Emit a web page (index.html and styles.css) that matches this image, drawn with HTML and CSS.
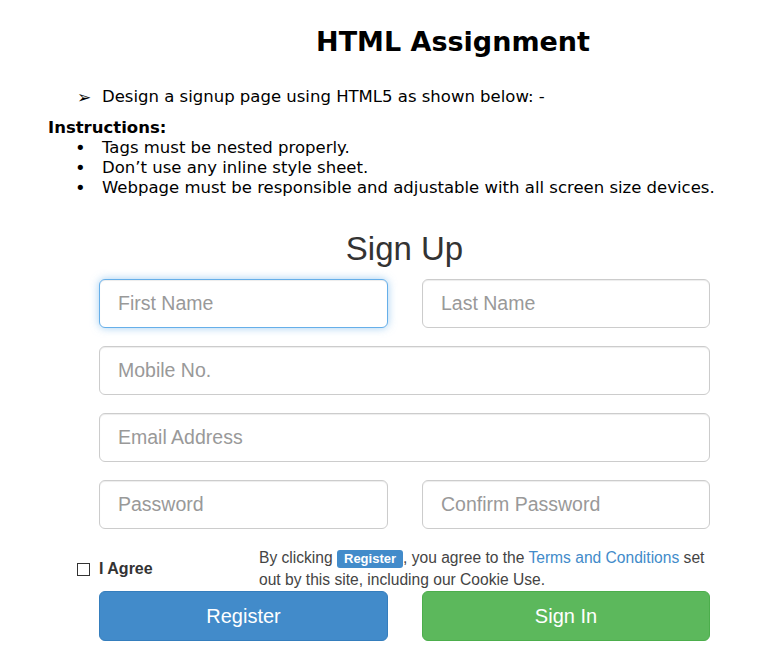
FILE: index.html
```html
<!DOCTYPE html>
<html lang="en">
<head>
<meta charset="utf-8">
<title>HTML Assignment</title>
<link rel="stylesheet" href="styles.css">
</head>
<body>
<div class="page">
  <h1 class="title">HTML Assignment</h1>
  <div class="task"><span class="arrow">➢</span><span>Design a signup page using HTML5 as shown below: -</span></div>
  <div class="instructions">
    <div class="ins-title">Instructions:</div>
    <ul class="ins-list">
      <li><span class="dot">•</span><span>Tags must be nested properly.</span></li>
      <li><span class="dot">•</span><span>Don’t use any inline style sheet.</span></li>
      <li><span class="dot">•</span><span>Webpage must be responsible and adjustable with all screen size devices.</span></li>
    </ul>
  </div>
  <form class="signup">
    <h2 class="signup-title">Sign Up</h2>
    <div class="grid">
      <input class="field focused" type="text" placeholder="First Name">
      <input class="field" type="text" placeholder="Last Name">
      <input class="field wide" type="text" placeholder="Mobile No.">
      <input class="field wide" type="email" placeholder="Email Address">
      <input class="field" type="password" placeholder="Password">
      <input class="field" type="password" placeholder="Confirm Password">
    </div>
    <div class="agree-row">
      <label class="agree"><span class="box"></span><span>I Agree</span></label>
      <p class="terms">By clicking <span class="badge">Register</span>, you agree to the <a class="link" href="#">Terms and Conditions</a> set out by this site, including our Cookie Use.</p>
    </div>
    <div class="grid buttons">
      <button class="btn btn-blue" type="button">Register</button>
      <button class="btn btn-green" type="button">Sign In</button>
    </div>
  </form>
</div>
</body>
</html>
```
FILE: styles.css
```css
html, body {
  margin: 0;
  padding: 0;
  background: #fff;
}
body {
  font-family: "DejaVu Sans", sans-serif;
  color: #000;
}
.page {
  padding: 0 8px;
}
.title {
  margin: 0;
  padding: 26px 0 0 148px;
  text-align: center;
  font-size: 27px;
  font-weight: bold;
  line-height: 31px;
}
.task {
  display: flex;
  align-items: center;
  margin: 30px 0 0 69px;
  font-size: 16.5px;
  line-height: 20px;
}
.arrow {
  width: 25px;
  font-size: 17px;
}
.instructions {
  margin-top: 11px;
  font-size: 16.5px;
  line-height: 20px;
}
.ins-title {
  margin-left: 40px;
  font-weight: bold;
}
.ins-list {
  list-style: none;
  margin: 0;
  padding: 0 0 0 67px;
}
.ins-list li {
  display: flex;
}
.dot {
  width: 27px;
  font-size: 18px;
}
.signup {
  width: 611px;
  margin: 32px 0 0 91px;
  font-family: "Liberation Sans", Arial, sans-serif;
  color: #333;
}
.signup-title {
  margin: 0 0 12px;
  text-align: center;
  font-size: 33px;
  font-weight: normal;
  line-height: 37px;
}
.grid {
  display: grid;
  grid-template-columns: 289px 288px;
  column-gap: 34px;
  row-gap: 18px;
}
.field {
  box-sizing: border-box;
  height: 49px;
  width: 100%;
  margin: 0;
  padding: 0 18px;
  border: 1px solid #ccc;
  border-radius: 6px;
  font-family: "Liberation Sans", Arial, sans-serif;
  font-size: 19.5px;
  color: #555;
  background: #fff;
  box-shadow: inset 0 1px 1px rgba(0,0,0,.075);
  outline: none;
}
.field::placeholder {
  color: #999;
}
.field.focused {
  border-color: #66afe9;
  box-shadow: inset 0 1px 1px rgba(0,0,0,.075), 0 0 8px rgba(102,175,233,.6);
}
.wide {
  grid-column: 1 / 3;
}
.agree-row {
  display: grid;
  grid-template-columns: 182px 1fr;
  align-items: center;
  margin: 18px 0 0 -22px;
}
.agree {
  display: flex;
  align-items: center;
  gap: 9px;
  font-size: 16px;
  font-weight: bold;
  color: #333;
}
.box {
  box-sizing: border-box;
  width: 13px;
  height: 13px;
  border: 1px solid #333;
}
.terms {
  margin: 0;
  font-size: 15.6px;
  line-height: 22px;
  color: #444;
}
.badge {
  display: inline-block;
  padding: 2px 7px 2px;
  background: #428bca;
  color: #fff;
  font-size: 13px;
  font-weight: bold;
  line-height: 14px;
  border-radius: 3px;
}
.link {
  color: #428bca;
  text-decoration: none;
}
.btn {
  height: 50px;
  border: 1px solid transparent;
  border-radius: 6px;
  color: #fff;
  font-family: "Liberation Sans", Arial, sans-serif;
  font-size: 20px;
  cursor: pointer;
}
.btn-blue {
  background: #428bca;
  border-color: #357ebd;
}
.btn-green {
  background: #5cb85c;
  border-color: #4cae4c;
}
```
